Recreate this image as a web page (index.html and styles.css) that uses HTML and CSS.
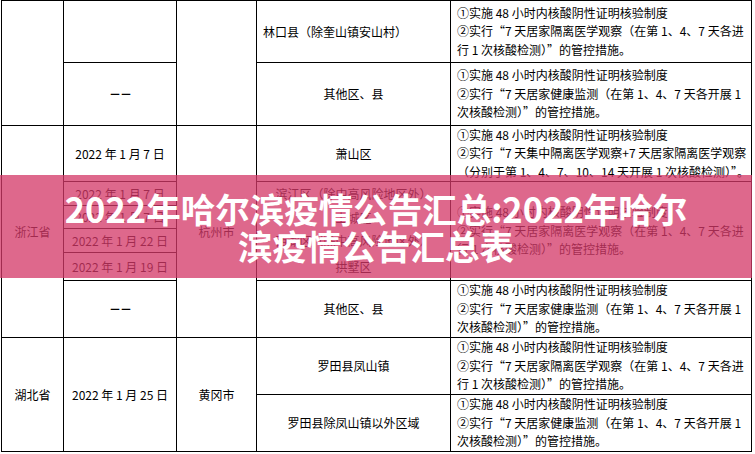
FILE: index.html
```html
<!DOCTYPE html>
<html lang="zh-CN">
<head>
<meta charset="utf-8">
<title>2022年哈尔滨疫情公告汇总</title>
<link rel="stylesheet" href="styles.css">
</head>
<body>
<div class="page">
  <div class="grid">
    <div class="cell s2"></div>
    <div class="cell"></div>
    <div class="cell s2"></div>
    <div class="cell left">林口县（除奎山镇安山村）</div>
    <div class="cell m">①实施 48 小时内核酸阴性证明核验制度<br>②实行“7 天居家隔离医学观察（在第 1、4、7 天各进<br>行 1 次核酸检测）”的管控措施。</div>

    <div class="cell"><span class="dash">－</span><span class="dash">－</span></div>
    <div class="cell">其他区、县</div>
    <div class="cell m">①实施 48 小时内核酸阴性证明核验制度<br>②实行“7 天居家健康监测（在第 1、4、7 天各开展 1<br>次核酸检测）”的管控措施。</div>

    <div class="cell s6">浙江省</div>
    <div class="cell">2022 年 1 月 7 日</div>
    <div class="cell s6">杭州市</div>
    <div class="cell">萧山区</div>
    <div class="cell m">①实施 48 小时内核酸阴性证明核验制度<br>②实行“7 天集中隔离医学观察+7 天居家隔离医学观察<br>（分别于第 1、4、7、10、14 天开展 1 次核酸检测）”。</div>

    <div class="cell">2022 年 1 月 7 日</div>
    <div class="cell open">滨江区（除中高风险地区外）</div>
    <div class="cell m s4">①实施 48 小时内核酸阴性证明核验制度<br>②实行“7 天居家隔离医学观察（在第 1、4、7 天各进<br>行 1 次核酸检测）”的管控措施。</div>

    <div class="cell">2022 年 1 月 7 日</div>
    <div class="cell open">上城区</div>

    <div class="cell">2022 年 1 月 22 日</div>
    <div class="cell open">西湖区（除中高风险地区外）</div>

    <div class="cell">2022 年 1 月 19 日</div>
    <div class="cell">拱墅区</div>

    <div class="cell"><span class="dash">－</span><span class="dash">－</span></div>
    <div class="cell">其他区、县</div>
    <div class="cell m">①实施 48 小时内核酸阴性证明核验制度<br>②实行“7 天居家健康监测（在第 1、4、7 天各开展 1<br>次核酸检测）”的管控措施。</div>

    <div class="cell s2">湖北省</div>
    <div class="cell s2">2022 年 1 月 25 日</div>
    <div class="cell s2">黄冈市</div>
    <div class="cell">罗田县凤山镇</div>
    <div class="cell m">①实施 48 小时内核酸阴性证明核验制度<br>②实行“7 天居家隔离医学观察（在第 1、4、7 天各进<br>行 1 次核酸检测）”的管控措施。</div>

    <div class="cell">罗田县除凤山镇以外区域</div>
    <div class="cell m">①实施 48 小时内核酸阴性证明核验制度<br>②实行“7 天居家健康监测（在第 1、4、7 天各开展 1<br>次核酸检测）”的管控措施。</div>
  </div>

  <div class="banner">
    <h1 class="title">2022年哈尔滨疫情公告汇总:2022年哈尔<br>滨疫情公告汇总表</h1>
  </div>
</div>
</body>
</html>
```

FILE: styles.css
```css
html, body {
  margin: 0;
  padding: 0;
  background: #fff;
}

.page {
  position: relative;
  width: 755px;
  height: 454px;
  overflow: hidden;
  font-family: "Noto Sans CJK SC", "Noto Sans", sans-serif;
  color: #000;
}

.grid {
  display: grid;
  grid-template-columns: 62px 113px 80px 194px 301px;
  grid-template-rows: 62px 63px 56px 24px 23px 24px 28px 57px 57px 57px;
  width: max-content;
  margin-left: 1px;
  border-top: 1px solid #000;
  border-left: 1px solid #000;
}

.cell {
  box-sizing: border-box;
  border-right: 1px solid #000;
  border-bottom: 1px solid #000;
  display: flex;
  align-items: center;
  justify-content: center;
  font-size: 12px;
  line-height: 16px;
  white-space: nowrap;
  text-align: center;
}

.s2 { grid-row: span 2; }
.s4 { grid-row: span 4; }
.s6 { grid-row: span 6; }

.open { border-bottom: none; }

.left {
  justify-content: flex-start;
  padding-left: 6px;
}

.m {
  justify-content: flex-start;
  text-align: left;
  padding-left: 6px;
  line-height: 18.5px;
}

.dash {
  display: inline-block;
  width: 11px;
  text-align: center;
  font-weight: 700;
}

.banner {
  position: absolute;
  left: 0;
  top: 175px;
  width: 752px;
  height: 103px;
  background: rgba(212, 56, 104, 0.76);
  display: flex;
  align-items: center;
  justify-content: center;
}

.title {
  margin: 0;
  color: #fff;
  font-family: "Noto Sans CJK SC", sans-serif;
  font-weight: 700;
  font-size: 34.5px;
  line-height: 37px;
  text-align: center;
  white-space: nowrap;
}
```
